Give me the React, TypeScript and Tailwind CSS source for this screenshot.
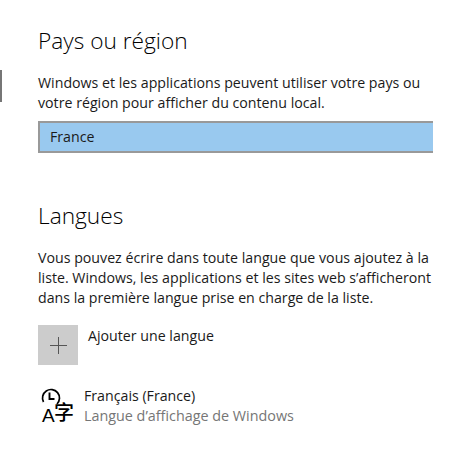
export default function App() {
  return (
    <div className="relative w-[451px] h-[463px] bg-white overflow-hidden pl-[38px] pt-[26px] text-[#1a1a1a] font-['Open_Sans',sans-serif]">
      <div className="absolute left-0 top-[70px] w-[2px] h-[32px] bg-[#767676]" />
      <h2 className="text-[22.7px] leading-[30px] font-light text-black">Pays ou région</h2>
      <p className="mt-[17px] text-[14.2px] leading-[20px] whitespace-nowrap">
        Windows et les applications peuvent utiliser votre pays ou<br />votre région pour afficher du contenu local.
      </p>
      <div className="mt-[8px] w-[395px] h-[32px] bg-[#99c9ef] border-2 border-r-0 border-[#999999] pl-[10px] flex items-center text-[14.2px] pb-[1px]">
        France
      </div>
      <h2 className="mt-[48px] text-[22.7px] leading-[30px] font-light text-black">Langues</h2>
      <p className="mt-[17px] text-[14.2px] leading-[20px] whitespace-nowrap">
        Vous pouvez écrire dans toute langue que vous ajoutez à la<br />liste. Windows, les applications et les sites web s’afficheront<br />dans la première langue prise en charge de la liste.
      </p>
      <div className="mt-[17px] flex items-start gap-[10px]">
        <div className="w-[40px] h-[40px] bg-[#cccccc] flex items-center justify-center">
          <svg width="17" height="17" viewBox="0 0 17 17" shapeRendering="crispEdges"><path d="M8.5 0v17M0 8.5h17" stroke="#555" strokeWidth="1" /></svg>
        </div>
        <div className="text-[14.2px] leading-[20px] mt-[1px]">Ajouter une langue</div>
      </div>
      <div className="mt-[21px] flex items-start gap-[7px]">
        <svg width="40" height="40" viewBox="0 0 40 40" className="shrink-0 -mt-[1px]">
          <path d="M5.5 17a8.5 8.5 0 1 1 13.5 2" fill="none" stroke="#000" strokeWidth="1.7" />
          <path d="M11.5 7.5v6.5h5" fill="none" stroke="#000" strokeWidth="1.9" />
          <text x="4" y="37" fontSize="19" fontFamily="'Liberation Sans'" fill="#000">A</text>
          <text x="16" y="35" fontSize="20" fontFamily="'Noto Sans CJK SC'" fontWeight="500" fill="#000">字</text>
        </svg>
        <div className="text-[14.2px] leading-[20px] -ml-[1px]">
          <div>Français (France)</div>
          <div className="text-[#767676] text-[14.35px]">Langue d’affichage de Windows</div>
        </div>
      </div>
    </div>
  );
}
